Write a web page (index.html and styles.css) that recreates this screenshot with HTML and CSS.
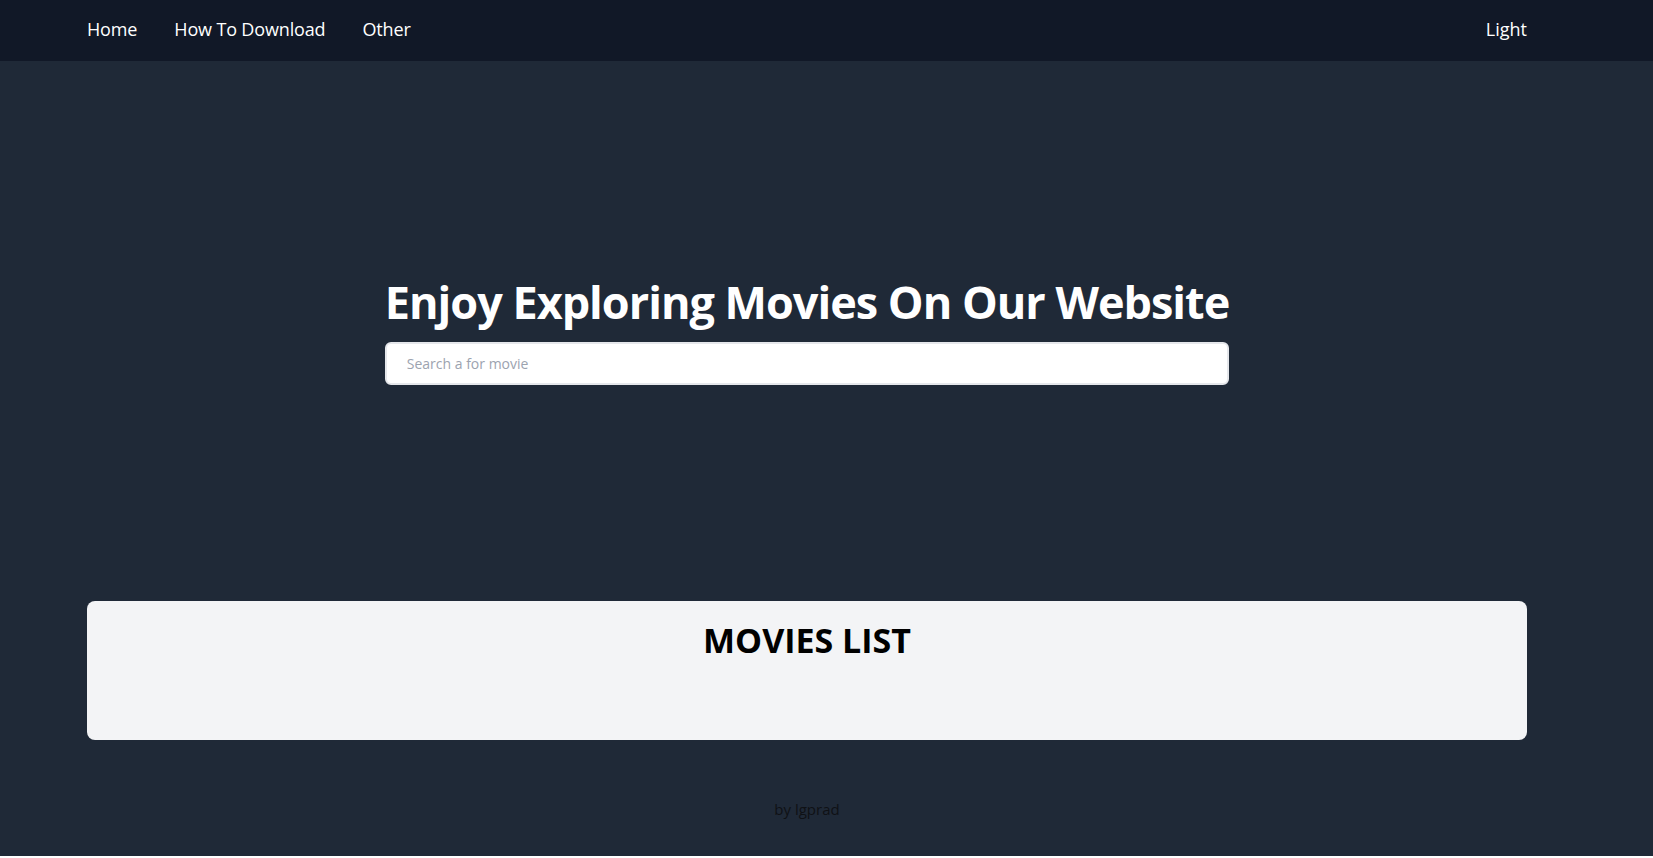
FILE: index.html
```html
<!DOCTYPE html>
<html lang="en">
<head>
<meta charset="utf-8">
<title>Movies</title>
<link rel="stylesheet" href="styles.css">
</head>
<body>
<div class="page">
  <header class="navbar">
    <nav class="nav-inner">
      <ul class="nav-links">
        <li><a href="#">Home</a></li>
        <li><a href="#">How To Download</a></li>
        <li><a href="#">Other</a></li>
      </ul>
      <button class="theme-toggle" type="button">Light</button>
    </nav>
  </header>
  <main class="content">
    <section class="hero">
      <div class="hero-inner">
        <h1 class="hero-title">Enjoy Exploring Movies On Our Website</h1>
        <input class="search" type="text" placeholder="Search a for movie">
      </div>
    </section>
    <section class="movies-card">
      <h2 class="movies-title">MOVIES LIST</h2>
      <div class="movies-grid"></div>
    </section>
    <footer class="footer">by lgprad</footer>
  </main>
</div>
</body>
</html>
```
FILE: styles.css
```css
* { box-sizing: border-box; }
html, body { margin: 0; padding: 0; }
body {
  background: #ffffff;
  font-family: "Open Sans", "Noto Sans", sans-serif;
}
.page {
  height: 856px;
  background: #1f2937;
  display: flex;
  flex-direction: column;
}
.navbar {
  background: #111827;
  height: 61px;
  flex-shrink: 0;
}
.nav-inner {
  width: 1440px;
  margin-left: 87px;
  height: 100%;
  padding-bottom: 3px;
  display: flex;
  align-items: center;
  justify-content: space-between;
}
.nav-links {
  list-style: none;
  margin: 0;
  padding: 0;
  display: flex;
  gap: 37px;
}
.nav-links a {
  color: #ffffff;
  text-decoration: none;
  font-size: 18px;
  letter-spacing: -0.15px;
}
.theme-toggle {
  background: none;
  border: none;
  padding: 0;
  color: #ffffff;
  font-family: inherit;
  font-size: 18px;
  cursor: pointer;
}
.content {
  width: 1440px;
  margin-left: 87px;
  display: flex;
  flex-direction: column;
}
.hero {
  height: 540px;
  padding-top: 2px;
  display: flex;
  align-items: center;
  justify-content: center;
}
.hero-inner {
  display: flex;
  flex-direction: column;
  align-items: stretch;
  gap: 17px;
}
.hero-title {
  margin: 0;
  color: #ffffff;
  font-size: 45px;
  line-height: 46px;
  letter-spacing: -1px;
  font-weight: 700;
  text-align: center;
}
.search {
  height: 43px;
  border: 2px solid #e5e7eb;
  border-radius: 6px;
  padding: 0 20px;
  font-family: inherit;
  font-size: 14px;
  color: #111827;
  background: #ffffff;
  outline: none;
}
.search::placeholder { color: #9ca3af; }
.movies-card {
  background: #f3f4f6;
  border-radius: 8px;
  height: 139px;
  padding-top: 19px;
}
.movies-title {
  margin: 0;
  text-align: center;
  font-size: 34px;
  line-height: 40px;
  font-weight: 700;
  color: #000000;
}
.footer {
  text-align: center;
  color: #0f1115;
  font-size: 15px;
  margin-top: 59px;
}
```
